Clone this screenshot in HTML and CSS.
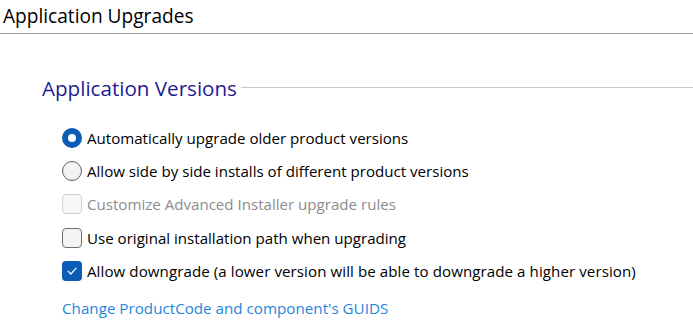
FILE: index.html
```html
<!DOCTYPE html>
<html>
<head>
<meta charset="utf-8">
<link rel="stylesheet" href="styles.css">
</head>
<body>
<div class="page-title">Application Upgrades</div>
<div class="group">
  <div class="group-head">
    <span class="group-title">Application Versions</span>
    <span class="group-line"></span>
  </div>
  <div class="options">
    <div class="opt">
      <span class="radio checked"></span>
      <span class="label">Automatically upgrade older product versions</span>
    </div>
    <div class="opt">
      <span class="radio"></span>
      <span class="label">Allow side by side installs of different product versions</span>
    </div>
    <div class="opt disabled">
      <span class="check"></span>
      <span class="label">Customize Advanced Installer upgrade rules</span>
    </div>
    <div class="opt">
      <span class="check"></span>
      <span class="label">Use original installation path when upgrading</span>
    </div>
    <div class="opt">
      <span class="check checked"><svg viewBox="0 0 20 20" width="20" height="20"><path d="M6 10.2 L8.8 13 L14.2 7.2" fill="none" stroke="#fff" stroke-width="1.2" stroke-linecap="round" stroke-linejoin="round"/></svg></span>
      <span class="label wide">Allow downgrade (a lower version will be able to downgrade a higher version)</span>
    </div>
  </div>
  <a class="link">Change ProductCode and component's GUIDS</a>
</div>
</body>
</html>
```
FILE: styles.css
```css
html, body {
  margin: 0;
  padding: 0;
  background: #ffffff;
}
body {
  font-family: "Open Sans", "Noto Sans", sans-serif;
  color: #000;
  width: 693px;
  height: 328px;
  overflow: hidden;
}
.page-title {
  height: 33px;
  line-height: 33px;
  padding-left: 3px;
  font-size: 19.1px;
  border-bottom: 1px solid #a0a0a0;
}
.group {
  padding-top: 39px;
}
.group-head {
  display: flex;
  align-items: center;
  height: 30px;
  padding-left: 42px;
}
.group-title {
  font-size: 20.6px;
  color: #1c1c94;
}
.group-line {
  flex: 1;
  height: 1px;
  background: #c8c8c8;
  margin-left: 4px;
  margin-top: -2px;
}
.options {
  margin-top: 18px;
  padding-left: 62px;
  display: flex;
  flex-direction: column;
}
.opt {
  height: 33.4px;
  display: flex;
  align-items: center;
}
.label {
  font-size: 15.1px;
  margin-left: 5px;
}
.label.wide {
  letter-spacing: 0.08px;
}
.disabled .label {
  color: #8c8c8c;
}
.radio {
  width: 18px;
  height: 18px;
  border: 1px solid #5e5e5e;
  border-radius: 50%;
  background: #f3f3f3;
  box-sizing: content-box;
}
.radio.checked {
  width: 20px;
  height: 20px;
  border: none;
  background: #0a5cb4;
  display: flex;
  align-items: center;
  justify-content: center;
}
.radio.checked::after {
  content: "";
  width: 8px;
  height: 8px;
  border-radius: 50%;
  background: #fff;
}
.check {
  width: 18px;
  height: 18px;
  border: 1px solid #6e6e6e;
  border-radius: 4px;
  background: #f4f4f4;
  box-sizing: content-box;
  display: flex;
}
.disabled .check {
  border-color: #cfcfcf;
  background: #f7f7f7;
}
.check.checked {
  width: 20px;
  height: 20px;
  border: none;
  background: #0a5cb4;
}
.link {
  display: block;
  margin-top: 10px;
  margin-left: 62px;
  font-size: 15.2px;
  color: #1f86dc;
  line-height: 20px;
}
```
